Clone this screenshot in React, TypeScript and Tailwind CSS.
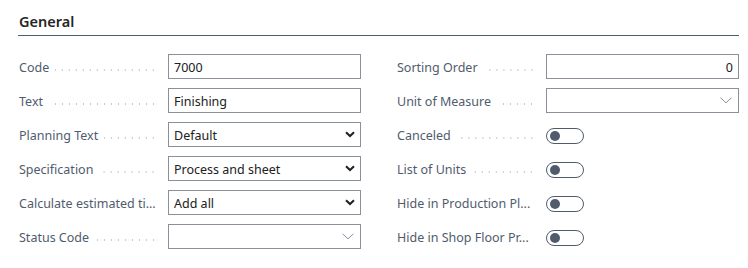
import React from "react";

const font = { fontFamily: '"Noto Sans", "Open Sans", sans-serif' };

function Dots() {
  return (
    <div className="ml-[6px] mr-[11px] flex-1 h-[2px] mt-[4px] bg-[radial-gradient(circle,#c4c8cf_0.8px,transparent_1px)] bg-[length:7px_2px] bg-right bg-repeat-x" />
  );
}

function Label({ text }: { text: string }) {
  return (
    <div className="flex w-[149px] shrink-0 items-center pt-[3px]">
      <span className="shrink-0 whitespace-nowrap text-[12.5px] text-[#505c6d]">{text}</span>
      <Dots />
    </div>
  );
}

function BoldChevron() {
  return (
    <svg width="10" height="7" viewBox="0 0 10 7" className="mr-[5px]">
      <path d="M1 1.2 L5 5 L9 1.2" fill="none" stroke="#212121" strokeWidth="2" />
    </svg>
  );
}

function ThinChevron() {
  return (
    <svg width="12" height="7" viewBox="0 0 12 7" className="mr-[6px]">
      <path d="M0.5 0.8 L6 5.8 L11.5 0.8" fill="none" stroke="#8a8f99" strokeWidth="1" />
    </svg>
  );
}

function Box({
  value,
  right,
  chevron,
}: {
  value?: string;
  right?: boolean;
  chevron?: "bold" | "thin";
}) {
  return (
    <div className="flex h-[25px] w-[193px] items-center border border-[#8a8f99] bg-white">
      <span
        className={`flex-1 whitespace-nowrap pt-[3px] text-[12.5px] text-[#212121] ${
          right ? "pr-[5px] text-right" : "pl-[5px]"
        }`}
      >
        {value}
      </span>
      {chevron === "bold" && <BoldChevron />}
      {chevron === "thin" && <ThinChevron />}
    </div>
  );
}

function Toggle() {
  return (
    <div className="mt-[2px] flex h-[16px] w-[38px] items-center rounded-full border-[1.5px] border-[#505c6d] bg-white pl-[3px]">
      <div className="h-[10px] w-[10px] rounded-full bg-[#505c6d]" />
    </div>
  );
}

function Row({ label, children }: { label: string; children: React.ReactNode }) {
  return (
    <div className="flex h-[25px] items-center">
      <Label text={label} />
      {children}
    </div>
  );
}

export default function App() {
  return (
    <div className="h-[268px] w-[748px] bg-white" style={font}>
      <div className="ml-[18px] w-[721px] pt-[11px]">
        <div className="border-b border-[#505c6d] pb-[4px] pl-px text-[14.5px] font-semibold leading-[20px] text-[#262626]">
          General
        </div>
        <div className="mt-[18px] grid grid-cols-[342px_342px] gap-x-[36px] pl-px">
          <div className="flex flex-col gap-[9px]">
            <Row label="Code">
              <Box value="7000" />
            </Row>
            <Row label="Text">
              <Box value="Finishing" />
            </Row>
            <Row label="Planning Text">
              <Box value="Default" chevron="bold" />
            </Row>
            <Row label="Specification">
              <Box value="Process and sheet" chevron="bold" />
            </Row>
            <Row label="Calculate estimated ti...">
              <Box value="Add all" chevron="bold" />
            </Row>
            <Row label="Status Code">
              <Box chevron="thin" />
            </Row>
          </div>
          <div className="flex flex-col gap-[9px]">
            <Row label="Sorting Order">
              <Box value="0" right />
            </Row>
            <Row label="Unit of Measure">
              <Box chevron="thin" />
            </Row>
            <Row label="Canceled">
              <Toggle />
            </Row>
            <Row label="List of Units">
              <Toggle />
            </Row>
            <Row label="Hide in Production Pl...">
              <Toggle />
            </Row>
            <Row label="Hide in Shop Floor Pr...">
              <Toggle />
            </Row>
          </div>
        </div>
      </div>
    </div>
  );
}
